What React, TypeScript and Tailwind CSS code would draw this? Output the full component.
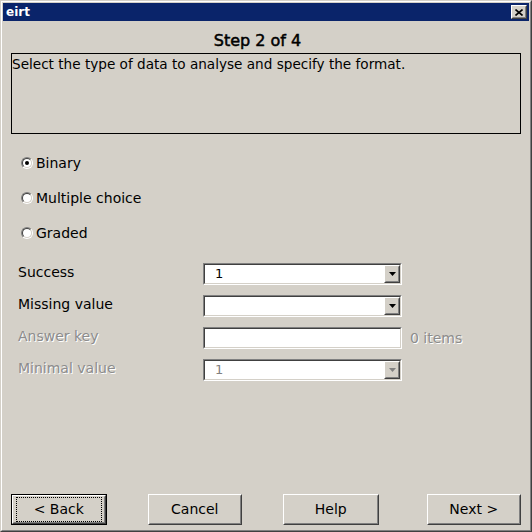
import React from "react";

const font = { fontFamily: '"DejaVu Sans", Verdana, sans-serif' };

function Sunken({ children, className = "" }: { children?: React.ReactNode; className?: string }) {
  return (
    <div className={"border border-t-[#808080] border-l-[#808080] border-r-white border-b-white " + className}>
      <div className="h-full border border-t-[#404040] border-l-[#404040] border-r-[#d4d0c8] border-b-[#d4d0c8]">
        {children}
      </div>
    </div>
  );
}

function Raised({ children, className = "" }: { children?: React.ReactNode; className?: string }) {
  return (
    <div className={"border border-t-white border-l-white border-r-[#404040] border-b-[#404040] bg-[#d4d0c8] " + className}>
      <div className="h-full border border-t-[#d4d0c8] border-l-[#d4d0c8] border-r-[#808080] border-b-[#808080] flex items-center justify-center">
        {children}
      </div>
    </div>
  );
}

function Arrow({ disabled = false }: { disabled?: boolean }) {
  return (
    <svg width="7" height="4" viewBox="0 0 7 4">
      <polygon points="0,0 7,0 3.5,4" fill={disabled ? "#808080" : "#000"} />
    </svg>
  );
}

function Combo({ value, disabled = false }: { value: string; disabled?: boolean }) {
  return (
    <Sunken className="w-[199px] h-[22px]">
      <div className="h-full bg-white flex items-center justify-between">
        <span className={"pl-[10px] text-[13px] " + (disabled ? "text-[#808080]" : "text-black")} style={font}>
          {value}
        </span>
        <Raised className="w-[16px] h-[18px]">
          <Arrow disabled={disabled} />
        </Raised>
      </div>
    </Sunken>
  );
}

function Radio({ checked, label }: { checked?: boolean; label: string }) {
  return (
    <div className="flex items-center h-[20px]">
      <div className="w-[12px] h-[12px] rounded-full border border-t-[#808080] border-l-[#808080] border-r-white border-b-white">
        <div className="w-full h-full rounded-full border border-t-[#404040] border-l-[#404040] border-r-[#d4d0c8] border-b-[#d4d0c8] bg-white flex items-center justify-center">
          {checked && <div className="w-[4px] h-[4px] rounded-full bg-black" />}
        </div>
      </div>
      <span className="ml-[3px] text-[14px] text-black leading-none" style={font}>{label}</span>
    </div>
  );
}

function Btn({ label, def = false, className = "" }: { label: string; def?: boolean; className?: string }) {
  const inner = (
    <Raised className="w-full h-full">
      <div className={"w-full h-full flex items-center justify-center " + (def ? "m-[2px] border border-dotted border-black" : "")}>
        <span className="text-[14px] text-black" style={font}>{label}</span>
      </div>
    </Raised>
  );
  if (def) {
    return <div className={"h-[31px] border border-black " + className}>{inner}</div>;
  }
  return <div className={"h-[31px] " + className}>{inner}</div>;
}

export default function App() {
  return (
    <div className="w-[532px] h-[532px] bg-[#d4d0c8] border border-t-[#d4d0c8] border-l-[#d4d0c8] border-r-[#404040] border-b-[#404040]" style={font}>
      <div className="w-full h-full border border-t-white border-l-white border-r-[#808080] border-b-[#808080] p-[1px] flex flex-col">
        {/* Title bar */}
        <div className="h-[18px] bg-[#0a246a] flex items-center justify-between pl-[3px] pr-[2px]">
          <span className="text-white font-bold text-[12px] leading-none">eirt</span>
          <Raised className="w-[16px] h-[14px]">
            <svg width="8" height="7" viewBox="0 0 8 7">
              <path d="M0.5 0.5 L7.5 6.5 M7.5 0.5 L0.5 6.5" stroke="#000" strokeWidth="1.6" />
            </svg>
          </Raised>
        </div>

        {/* Body */}
        <div className="flex-1 flex flex-col px-[8px]">
          <div className="text-center text-[16px] text-black mt-[11px] leading-[18px] pr-[17px] [-webkit-text-stroke:0.5px_black]">Step 2 of 4</div>
          <div className="mt-[3px] h-[81px] border border-black">
            <div className="text-[13.6px] text-black leading-[18px] mt-[1px]">Select the type of data to analyse and specify the format.</div>
          </div>

          <div className="ml-[10px] mt-[19px] flex flex-col gap-[15px]">
            <Radio checked label="Binary" />
            <Radio label="Multiple choice" />
            <Radio label="Graded" />
          </div>

          <div className="mt-[20px] flex flex-col gap-[10px]">
            {[
              { label: "Success", kind: "combo", value: "1" },
              { label: "Missing value", kind: "combo", value: "" },
              { label: "Answer key", kind: "text", disabledLabel: true },
              { label: "Minimal value", kind: "combo", value: "1", disabled: true, disabledLabel: true },
            ].map((r) => (
              <div key={r.label} className="flex items-center h-[22px]">
                <span
                  className={"w-[192px] pl-[7px] text-[14px] -mt-[3px] " + (r.disabledLabel ? "text-[#8c8c8c] [text-shadow:1px_1px_0_#fff]" : "text-black")}
                >
                  {r.label}
                </span>
                {r.kind === "combo" ? (
                  <Combo value={r.value || ""} disabled={r.disabled} />
                ) : (
                  <>
                    <Sunken className="w-[199px] h-[22px]">
                      <div className="h-full bg-white" />
                    </Sunken>
                    <span className="ml-[8px] text-[14px] text-[#8c8c8c] [text-shadow:1px_1px_0_#fff]">0 items</span>
                  </>
                )}
              </div>
            ))}
          </div>

          <div className="mt-auto mb-[4px] flex items-center">
            <Btn label="< Back" def className="w-[96px]" />
            <Btn label="Cancel" className="ml-[41px] w-[95px]" />
            <Btn label="Help" className="ml-[41px] w-[96px]" />
            <Btn label="Next >" className="ml-[48px] w-[95px]" />
          </div>
        </div>
      </div>
    </div>
  );
}
